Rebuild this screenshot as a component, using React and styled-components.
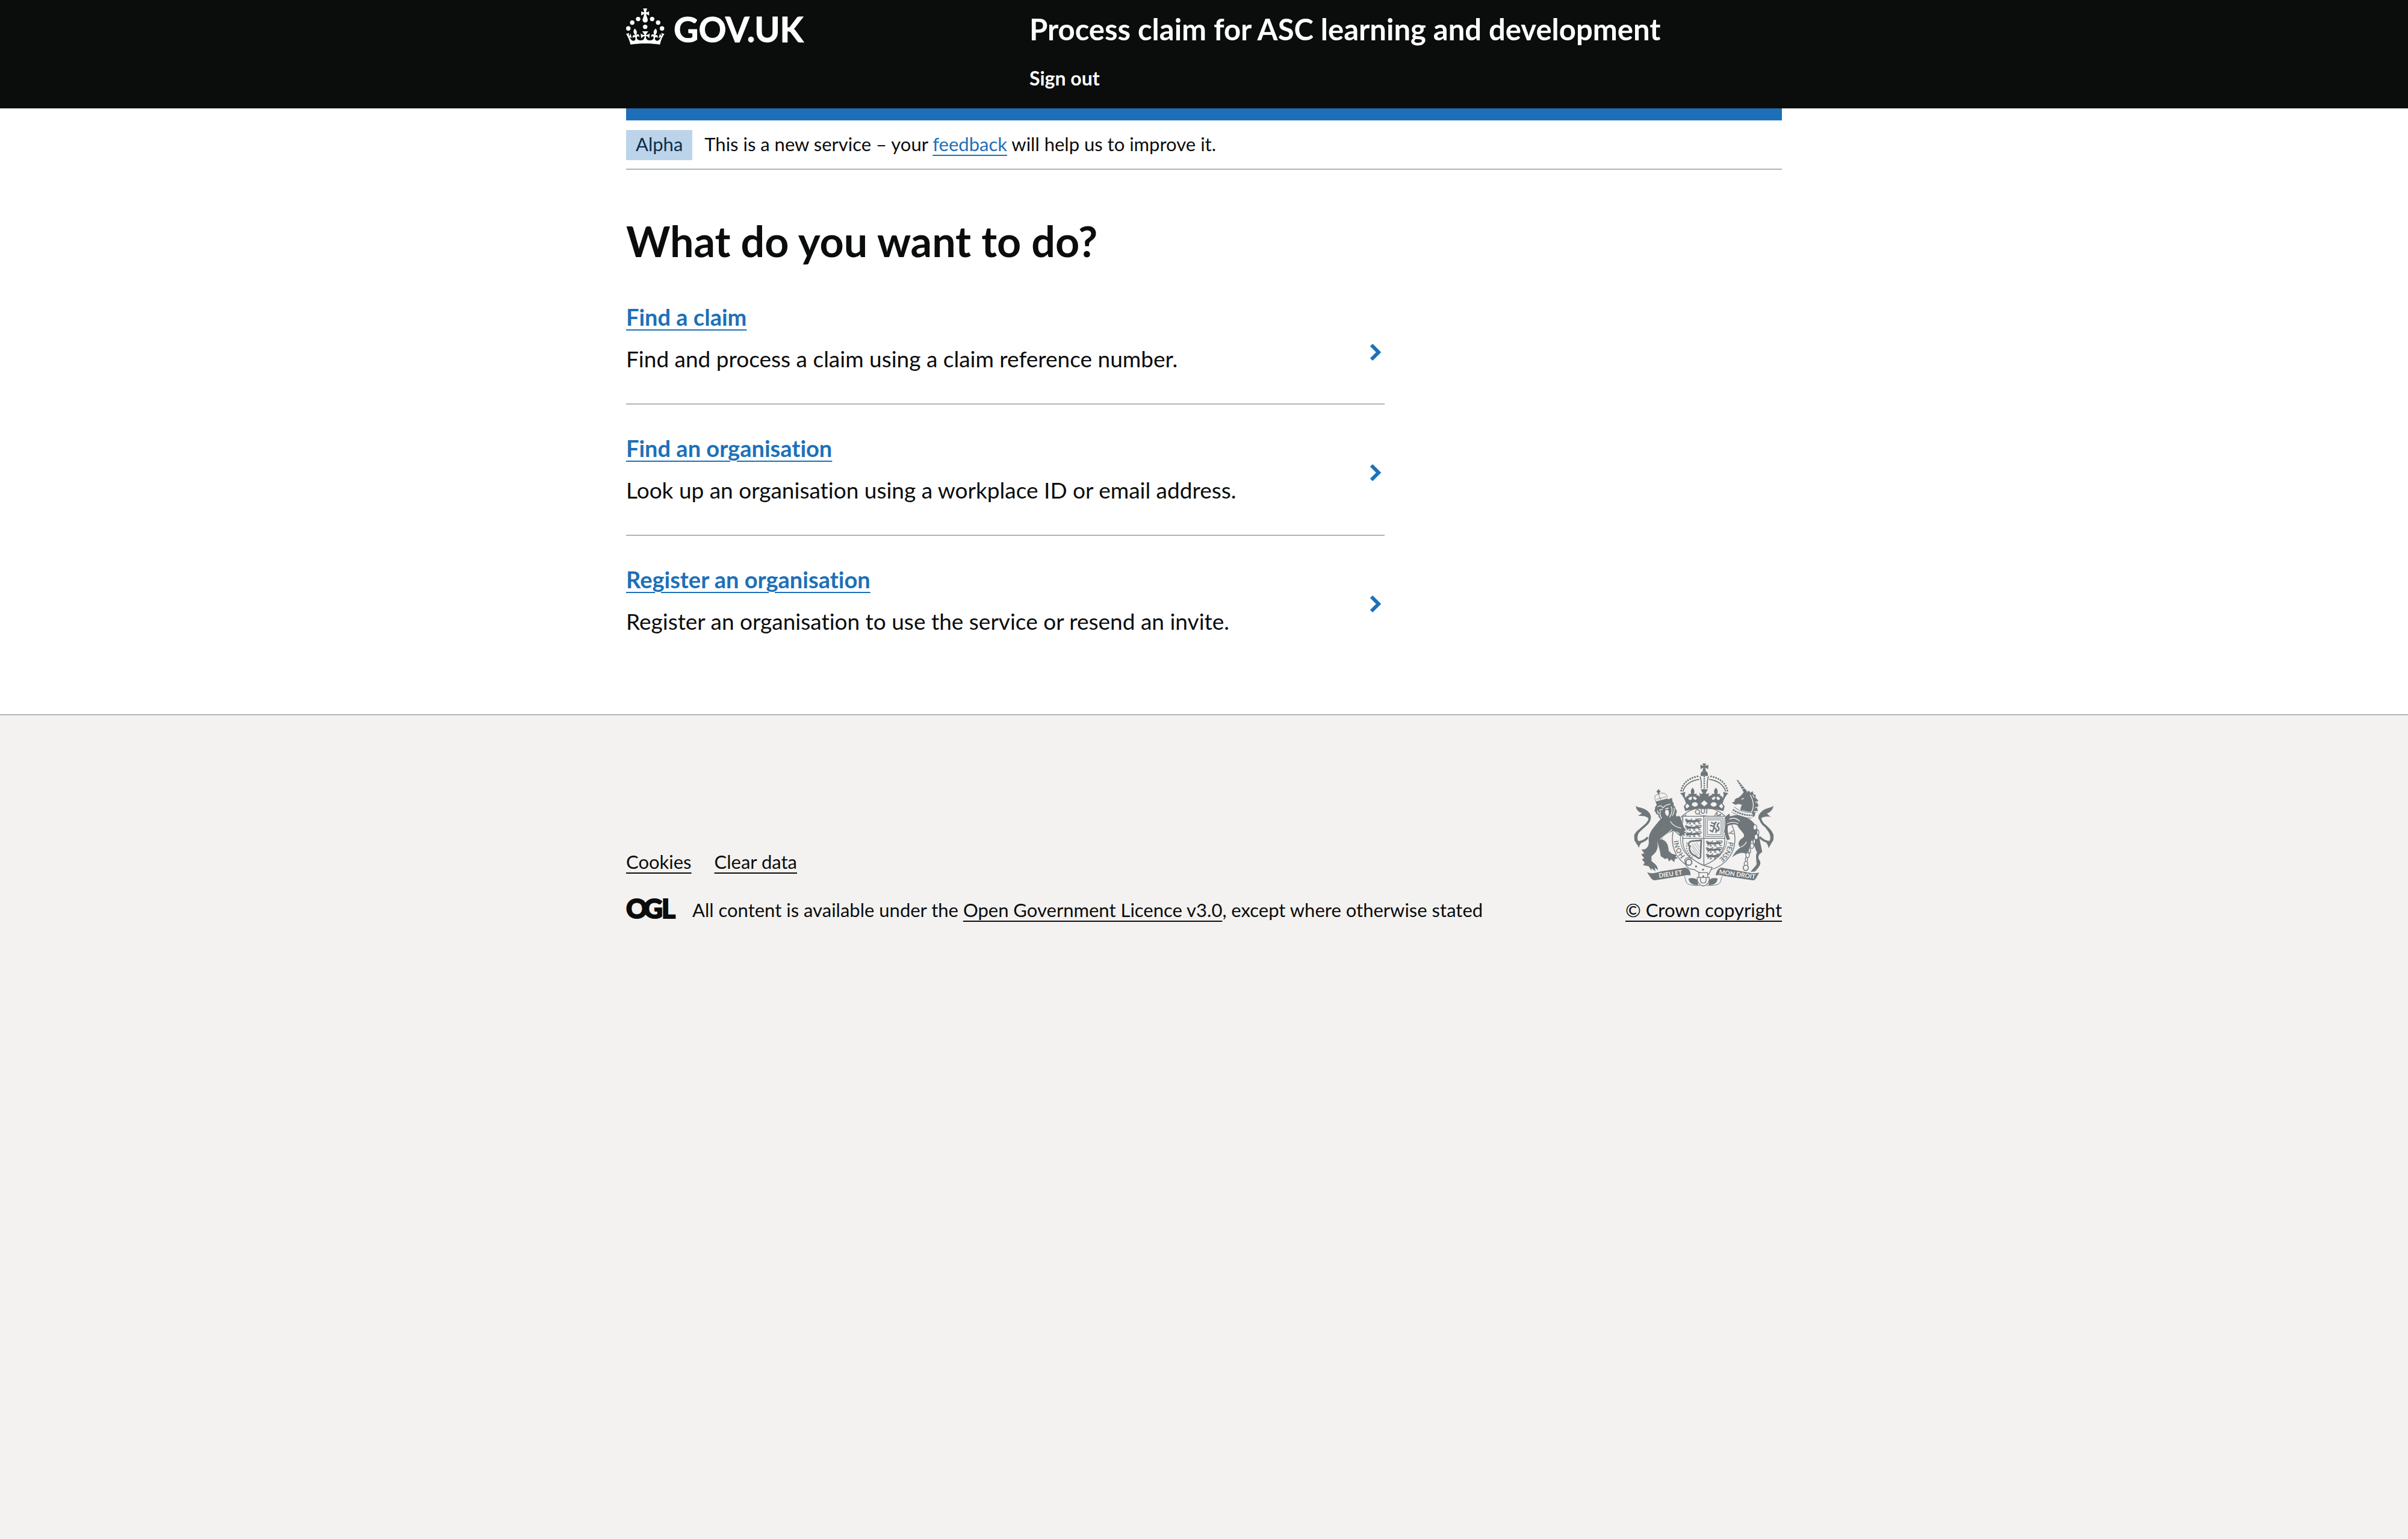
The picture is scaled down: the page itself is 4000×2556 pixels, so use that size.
import React from 'react';
import styled, { createGlobalStyle } from 'styled-components';

const color = {
  ink: '#0b0c0c',
  link: '#1d70b8',
  line: '#b1b4b6',
  canvas: '#f3f2f1',
  crest: '#6f777b',
};

const GlobalStyle = createGlobalStyle`
  *, *::before, *::after { box-sizing: border-box; }
  body {
    margin: 0;
    background: #fff;
    color: ${color.ink};
    font-family: Lato, "Liberation Sans", sans-serif;
    font-size: 37px;
    font-variant-ligatures: none;
    line-height: 50px;
  }
  h1, h2, p, ul { margin: 0; padding: 0; }
  ul { list-style: none; }
  svg { display: block; flex: none; overflow: visible; }
`;

const Page = styled.div`
  display: flex;
  flex-direction: column;
  min-height: 100vh;
`;

const Container = styled.div`
  width: 100%;
  max-width: 1920px;
  margin: 0 auto;
`;

const Link = styled.a`
  color: ${(p) => (p.$plain ? color.ink : color.link)};
  text-decoration: underline;
  text-decoration-thickness: 2px;
  text-underline-offset: 6px;
`;

const Header = styled.header`
  background: ${color.ink};
  color: #fff;
`;

const HeaderGrid = styled(Container)`
  display: grid;
  grid-template-columns: 1fr 2fr;
  column-gap: 45px;
  padding: 14px 0 30px;
`;

const LogoLink = styled.a`
  display: flex;
  align-items: flex-start;
  gap: 15px;
  justify-self: start;
  color: #fff;
  text-decoration: none;
`;

const Wordmark = styled.span`
  font-size: 57px;
  font-weight: 700;
  line-height: 68px;
  -webkit-text-stroke: 1px #fff;
`;

const ServiceNav = styled.div`
  display: flex;
  flex-direction: column;
  align-items: flex-start;
  gap: 28px;
`;

const ServiceName = styled.a`
  color: #fff;
  font-size: 49px;
  font-weight: 700;
  line-height: 68px;
  text-decoration: none;
`;

const NavLink = styled.a`
  color: #fff;
  font-size: 32px;
  font-weight: 700;
  line-height: 40px;
  text-decoration: none;
`;

const PhaseBanner = styled(Container)`
  display: flex;
  align-items: flex-start;
  gap: 20px;
  padding: 16px 0 14px;
  border-top: 20px solid ${color.link};
  border-bottom: 2px solid ${color.line};
  font-size: 31px;
  line-height: 46px;
`;

const Tag = styled.strong`
  padding: 0 16px 4px;
  background: #bbd4ea;
  color: #0c2d4a;
  font-weight: 400;
`;

const Main = styled.main`
  padding: 80px 0;
`;

const Title = styled.h1`
  margin-bottom: 52px;
  font-size: 70px;
  font-weight: 700;
  line-height: 76px;
`;

const Columns = styled.div`
  display: grid;
  grid-template-columns: repeat(3, 1fr);
  column-gap: 60px;
`;

const TaskList = styled.ul`
  grid-column: span 2;
`;

const Task = styled.li`
  display: flex;
  align-items: center;
  justify-content: space-between;
  padding-right: 6px;
  border-bottom: 2px solid ${color.line};
  &:last-child { border-bottom: 0; }
`;

const TaskText = styled.div`
  display: flex;
  flex-direction: column;
  gap: 20px;
  padding: 47px 0 49px;
  ${Task}:first-child & { padding-top: 11px; }
`;

const TaskHeading = styled.h2`
  font-size: 38px;
  font-weight: 700;
  line-height: 50px;
`;

const ChevronIcon = styled.svg`
  margin-top: 10px;
`;

const Footer = styled.footer`
  flex: 1;
  padding: 80px 0;
  border-top: 2px solid ${color.line};
  background: ${color.canvas};
  font-size: 31px;
  line-height: 40px;
`;

const FooterRow = styled(Container)`
  display: flex;
  align-items: flex-end;
  justify-content: space-between;
`;

const FooterMeta = styled.div`
  display: flex;
  flex-direction: column;
  gap: 40px;
`;

const FooterLinks = styled.ul`
  display: flex;
  gap: 38px;
`;

const Licence = styled.div`
  display: flex;
  align-items: flex-start;
  gap: 28px;
`;

const Copyright = styled.div`
  display: flex;
  flex-direction: column;
  align-items: center;
  gap: 19px;
`;

const OglText = styled.text`
  font: 900 44px Lato, "Liberation Sans", sans-serif;
  fill: ${color.ink};
  stroke: ${color.ink};
  stroke-width: 2px;
`;

const GarterText = styled.text`
  font: 400 33px Lato, "Liberation Sans", sans-serif;
  fill: ${color.crest};
  stroke: ${color.crest};
  stroke-width: 1px;
`;

const MottoText = styled.text`
  font: 700 31px Lato, "Liberation Sans", sans-serif;
  fill: ${color.canvas};
  text-anchor: middle;
`;

function Crown() {
  return (
    <svg width="64" height="60" viewBox="0 0 64 60" fill="currentColor" aria-hidden="true">
      <circle cx="20" cy="17.6" r="3.7" />
      <circle cx="10.2" cy="23.5" r="3.7" />
      <circle cx="3.7" cy="33.2" r="3.7" />
      <circle cx="31.7" cy="30.6" r="3.7" />
      <circle cx="43.3" cy="17.6" r="3.7" />
      <circle cx="53.2" cy="23.5" r="3.7" />
      <circle cx="59.7" cy="33.2" r="3.7" />
      <path d="M33.1,9.8c.2-.1.3-.3.5-.5l4.6,2.4v-6.8l-4.6,1.5c-.1-.2-.3-.3-.5-.5l1.9-5.9h-6.7l1.9,5.9c-.2.1-.3.3-.5.5l-4.6-1.5v6.8l4.6-2.4c.1.2.3.3.5.5l-2.6,8c-.9,2.8,1.2,5.7,4.1,5.7h0c3,0,5.1-2.9,4.1-5.7l-2.6-8ZM37,37.9s-3.4,3.8-4.1,6.1c2.2,0,4.2-.5,6.4-2.8l-.7,8.5c-2-2.8-4.4-4.1-5.7-3.8.1,3.1.5,6.7,5.8,7.2,3.7.3,6.7-1.5,7-3.8.4-2.6-2-4.3-3.7-1.6-1.4-4.5,2.4-6.1,4.9-3.2-1.9-4.5-1.8-7.7,2.4-10.9,3,4,2.6,7.3-1.2,11.1,2.4-1.3,6.2,0,4,4.6-1.2-2.8-3.7-2.2-4.2.2-.3,1.7.7,3.7,3,4.2,1.9.3,4.7-.9,7-5.9-1.3,0-2.4.7-3.9,1.7l2.4-8c.6,2.3,1.4,3.7,2.2,4.5.6-1.6.5-2.8,0-5.3l5,1.8c-2.6,3.6-5.2,8.7-7.3,17.5-7.4-1.1-15.7-1.7-24.5-1.7h0c-8.8,0-17.1.6-24.5,1.7-2.1-8.9-4.7-13.9-7.3-17.5l5-1.8c-.5,2.5-.6,3.7,0,5.3.8-.8,1.6-2.3,2.2-4.5l2.4,8c-1.5-1-2.6-1.7-3.9-1.7,2.3,5,5.2,6.2,7,5.9,2.3-.4,3.3-2.4,3-4.2-.5-2.4-3-3.1-4.2-.2-2.2-4.6,1.6-6,4-4.6-3.7-3.7-4.2-7.1-1.2-11.1,4.2,3.2,4.3,6.4,2.4,10.9,2.5-2.8,6.3-1.3,4.9,3.2-1.8-2.7-4.1-1-3.7,1.6.3,2.3,3.3,4.1,7,3.8,5.4-.5,5.7-4.2,5.8-7.2-1.3-.2-3.7,1-5.7,3.8l-.7-8.5c2.2,2.3,4.2,2.7,6.4,2.8-.7-2.3-4.1-6.1-4.1-6.1h10.6Z" />
    </svg>
  );
}

function Chevron() {
  return (
    <ChevronIcon width="18" height="28" viewBox="0 0 18 28" aria-hidden="true">
      <path d="M2 2 L14 14 L2 26" fill="none" stroke={color.link} strokeWidth="6" />
    </ChevronIcon>
  );
}

function OglLogo() {
  return (
    <svg width="82" height="40" viewBox="0 0 82 40" role="img" aria-label="OGL">
      <OglText x="0" y="34">O</OglText>
      <OglText x="29" y="34">G</OglText>
      <OglText x="59" y="34">L</OglText>
    </svg>
  );
}

function HeraldicLion() {
  return (
    <g fill="none" stroke={color.crest} strokeLinecap="round">
      <path strokeWidth="11" d="M14 14 C24 9 34 17 44 14 S60 10 68 13" />
      <circle cx="10" cy="12" r="7" fill={color.crest} strokeWidth="2" />
      <path strokeWidth="4" d="M17 18 L8 25 M22 18 L26 27 L19 27 M49 17 L42 26 L50 27 M64 15 L70 25 L77 24 M68 12 C80 14 84 2 76 2 C68 1 58 6 52 2 M34 2 L28 6 M6 2 L0 7" />
    </g>
  );
}

const lionRows = [0, 1, 2];

function ThreeLions({ x, y }) {
  return lionRows.map((i) => (
    <g key={i} transform={`translate(${x} ${y + i * 32})`}>
      <HeraldicLion />
    </g>
  ));
}

function CrownHalf() {
  return (
    <g>
      <path fill="none" stroke={color.crest} strokeWidth="9" strokeLinecap="round" strokeDasharray="0.1 12.6" d="M308 219 C315 184 344 156 393 148" />
      <path fill="none" stroke={color.crest} strokeWidth="5" d="M316 224 C326 192 352 170 398 163" />
      <path fill="none" stroke={color.crest} strokeWidth="5" d="M402 148 C408 164 409 184 408 208" />
      <path d="M423 246 L405 212 H424 V300 Z" />
      <path d="M303 232 L330 226 C324 238 326 247 331 256 C338 240 350 240 352 256 C345 252 341 257 347 264 C356 270 363 263 362 250 C350 252 343 244 344 235 C351 237 356 236 358 234 C353 222 358 212 365 205 C373 213 377 224 371 234 C376 237 381 236 385 233 C388 244 380 252 367 250 C368 262 375 268 383 264 C388 258 384 252 378 255 C380 241 393 238 399 250 C403 244 400 236 397 230 C408 238 414 236 424 228 V312 C388 308 355 314 328 321 L321 297 L332 284 C326 262 316 244 303 232 Z" />
    </g>
  );
}

function Garter() {
  return (
    <g>
      <circle cx="420" cy="460" r="156" fill={color.canvas} stroke={color.crest} strokeWidth="4" />
      <circle cx="420" cy="460" r="116" fill={color.canvas} stroke={color.crest} strokeWidth="3" />
      <GarterText><textPath href="#garter" startOffset="26">HONI</textPath></GarterText>
      <GarterText><textPath href="#garter" startOffset="168">SOIT</textPath></GarterText>
      <GarterText><textPath href="#garter" startOffset="276">QUI</textPath></GarterText>
      <GarterText><textPath href="#garter" startOffset="370">MAL</textPath></GarterText>
      <GarterText><textPath href="#garter" startOffset="478">Y</textPath></GarterText>
      <GarterText><textPath href="#garter" startOffset="530">PENSE</textPath></GarterText>
    </g>
  );
}

function Shield() {
  return (
    <g>
      <path d="M316 347 H525 V470 C525 530 480 568 421 592 C362 568 316 530 316 470 Z" fill={color.canvas} stroke={color.crest} strokeWidth="4" />
      <g clipPath="url(#shield)">
        <path fill="none" stroke={color.crest} strokeWidth="4" d="M421 347 V592 M316 457 H525" />
        <ThreeLions x={328} y={358} />
        <ThreeLions x={432} y={468} />
        <path fill="none" stroke={color.crest} strokeWidth="3" d="M429 356 H516 V448 H429 Z M438 365 H507 V439 H438 Z" />
        <path fill="none" stroke={color.crest} strokeWidth="7" d="M456 378 L472 384 L484 376 M478 380 L470 400 L484 414 M470 398 L452 392 M472 404 L464 424 L450 416 M484 412 L480 430 M486 420 C500 420 498 400 488 398 C486 388 494 382 498 378" />
        <path fill="none" stroke={color.crest} strokeWidth="8" d="M350 476 C366 464 382 474 408 466 L404 552 C396 562 388 552 380 546 C352 536 344 510 352 496 C340 492 344 482 350 476 Z" />
        <path fill="none" stroke={color.crest} strokeWidth="2" d="M360 496 L392 544 M362 484 L398 536 M372 480 L400 520 M384 478 L400 502 M358 512 L384 544" />
        <path fill="none" stroke={color.crest} strokeWidth="4" strokeDasharray="8 5" d="M338 478 C328 506 340 540 370 556" />
      </g>
    </g>
  );
}

function Lion() {
  return (
    <g>
      <path fill="none" stroke={color.crest} strokeWidth="11" d="M100 308 C150 322 166 350 138 384 C108 412 78 430 80 462 C82 486 122 476 142 452" />
      <path d="M82 294 C94 308 118 300 140 322 C152 334 156 352 150 364 C142 352 128 342 92 346 C104 338 110 334 112 330 C98 328 88 318 84 306 Z" />
      <path d="M74 440 C82 424 94 412 112 404 C92 430 88 448 92 466 C96 478 104 480 112 478 C104 484 100 492 98 504 C92 488 72 476 74 440 Z" />
      <path stroke={color.canvas} strokeWidth="5" paintOrder="stroke" d="M300 346 C318 380 316 398 326 408 L332 416 L322 422 L334 428 L322 434 L330 444 L312 440 L310 448 C296 446 288 430 270 420 C250 428 226 440 212 462 C236 470 244 490 246 520 L262 534 L288 540 L280 548 L292 556 L276 560 L274 576 L258 562 L248 572 L240 556 L228 560 L206 546 L202 520 C196 500 194 486 188 468 C196 504 188 524 160 546 L160 570 C176 584 192 592 192 616 L176 602 L180 622 L160 606 L160 618 L146 596 L118 590 L126 578 L112 562 L124 556 L108 536 L124 532 L110 512 C134 516 150 498 146 466 C144 430 170 404 196 372 C214 350 240 344 270 350 Z" />
      <path fill="none" stroke={color.canvas} strokeWidth="4" d="M204 462 C222 446 250 428 262 412 M254 372 C266 392 284 402 308 406 M284 424 L300 436" />
      <path d="M186 292 C172 304 182 310 174 320 C186 326 176 336 194 340 C192 352 204 356 210 372 C220 362 228 380 238 368 C250 372 262 356 264 350 C276 352 280 350 286 348 C276 338 288 332 286 318 C276 312 284 300 270 294 C276 282 262 276 264 268 L262 256 L244 262 L184 280 Z" />
      <path fill="none" stroke={color.canvas} strokeWidth="4" d="M190 300 L206 294 L218 304 L232 292 L254 286 M198 316 L216 312 M228 310 L246 306 M206 322 C196 332 204 346 210 358 M258 298 C266 316 262 334 250 352 M272 304 C276 320 270 334 264 344 M190 318 L194 336" />
      <path fill={color.canvas} d="M230 318 C236 310 246 316 246 326 C248 340 240 350 236 344 C230 336 224 330 230 318 Z" />
      <path d="M180 274 L240 258 L242 266 L184 284 Z M191 214 H199 V220 H204 V228 H199 V236 H191 V228 H186 V220 H191 Z" />
      <path fill="none" stroke={color.crest} strokeWidth="4" strokeDasharray="4 3" d="M182 272 C170 250 180 238 194 238 C214 224 240 234 238 256 M196 240 L206 264 M186 262 L232 250" />
    </g>
  );
}

const chainLinks = [[676, 402], [690, 428], [682, 450], [672, 472], [661, 494], [649, 518], [639, 541], [633, 564], [631, 585]];

function Unicorn() {
  return (
    <g>
      <path d="M584 166 L592 168 L638 224 L622 232 Z" />
      <path fill="none" stroke={color.canvas} strokeWidth="3" d="M588 182 L602 174 M594 192 L610 184 M601 202 L618 194 M608 213 L626 206" />
      <path d="M612 236 L626 220 L636 228 L646 218 L652 230 L664 222 L668 236 L680 242 L678 254 L692 268 L686 278 L694 294 L686 304 L690 320 L678 328 L674 346 L656 358 L662 324 C640 328 622 316 606 318 C600 306 608 300 610 290 C598 286 588 284 580 290 L560 280 L574 274 C572 264 580 258 590 256 C600 250 606 244 612 236 Z" />
      <path fill="none" stroke={color.canvas} strokeWidth="4" d="M652 240 C668 270 674 300 658 326 M664 240 L672 254 M686 272 L678 280 M688 300 L676 306 M686 322 L670 324 M608 262 L620 258" />
      <path stroke={color.canvas} strokeWidth="5" paintOrder="stroke" d="M526 350 L548 334 L552 348 C580 338 600 340 626 350 C660 362 686 392 694 430 C698 466 708 500 712 526 C692 536 686 554 702 572 C706 592 690 606 676 622 L654 624 C666 606 680 596 684 584 C682 560 678 540 686 528 C676 510 672 484 660 466 C648 496 652 514 632 534 C612 524 586 530 562 552 C578 520 592 510 606 502 C588 494 590 472 612 456 C640 440 600 420 588 392 C572 384 556 388 542 394 C536 410 542 440 552 462 L536 466 L522 424 L528 384 Z" />
      <path fill="none" stroke={color.canvas} strokeWidth="4" d="M592 384 C576 372 556 376 536 384 M606 500 C616 496 628 486 634 474 M548 362 C568 352 586 358 600 372" />
      <path fill="none" stroke={color.canvas} strokeWidth="20" d="M562 312 C590 332 630 346 664 344" />
      <path fill="none" stroke={color.crest} strokeWidth="8" strokeDasharray="9 3" d="M566 314 C590 332 630 344 662 342" />
      <path fill="none" stroke={color.crest} strokeWidth="3" d="M572 300 C596 322 634 330 664 328 M560 326 C588 344 624 356 656 356" />
      <path fill="none" stroke={color.crest} strokeWidth="11" d="M744 324 C704 330 690 356 716 386 C748 414 768 430 762 462 C758 486 722 474 698 450" />
      <path d="M768 294 C756 308 730 302 706 326 C692 340 690 352 696 366 C706 352 728 346 756 350 C744 342 738 338 736 332 C750 328 764 318 768 294 Z M768 440 C760 424 748 412 728 404 C750 430 756 448 750 466 C746 476 738 480 730 478 C738 484 742 494 744 508 C750 488 768 476 768 440 Z" />
      {chainLinks.map(([cx, cy], i) => (
        <ellipse key={cy} cx={cx} cy={cy} rx={i % 2 ? 5 : 9} ry="13" fill={color.canvas} stroke={color.crest} strokeWidth="4" />
      ))}
      <circle cx="630" cy="604" r="13" fill={color.canvas} stroke={color.crest} strokeWidth="5" />
    </g>
  );
}

function RoyalCrown() {
  return (
    <g>
      <path d="M414 84 H432 L427 97 L443 90 V112 L427 105 L432 120 H414 L419 105 L404 112 V90 L419 97 Z" />
      <path d="M405 146 C403 128 412 120 423 120 C434 120 443 128 441 146 Z" />
      <path fill="none" stroke={color.crest} strokeWidth="8" strokeLinecap="round" strokeDasharray="0.1 11" d="M423 150 V206" />
      <CrownHalf />
      <g transform="matrix(-1 0 0 1 846 0)">
        <CrownHalf />
      </g>
      <g fill={color.canvas}>
        <path d="M423 268 L440 283 L423 298 L406 283 Z M338 284 L350 296 L337 308 L328 298 Z M508 284 L496 296 L509 308 L518 298 Z" />
        <ellipse cx="376" cy="288" rx="15" ry="11" />
        <ellipse cx="470" cy="288" rx="15" ry="11" />
      </g>
    </g>
  );
}

function StrapAndRibbon() {
  return (
    <g>
      <g fill={color.canvas} stroke={color.crest} strokeWidth="4">
        <path d="M326 566 C328 552 350 550 364 560 C390 576 410 596 462 602 L446 636 C416 634 396 630 372 612 C346 612 328 598 326 566 Z" />
        <path d="M396 628 H440 V656 L418 694 L396 656 Z" />
        <path d="M388 652 H448 C450 676 436 692 418 694 C400 692 386 676 388 652 Z" />
        <path fill="none" d="M404 652 V668 C406 684 430 684 432 668 V652" />
        <circle cx="346" cy="576" r="15" strokeWidth="6" />
      </g>
      <circle cx="382" cy="597" r="5" />
      <circle cx="417" cy="613" r="5" />
      <circle cx="418" cy="646" r="5" />
      <path d="M138 625 C158 636 182 630 206 622 L326 603 C344 604 356 618 354 642 C346 640 338 640 326 642 L178 666 C166 668 158 660 138 625 Z" />
      <path d="M696 627 C676 634 654 630 636 626 L508 603 C496 604 482 618 480 642 C492 638 506 640 520 644 L664 666 C676 668 682 656 696 627 Z" />
      <path d="M344 658 C362 652 380 656 388 664 L392 690 C366 690 348 682 344 658 Z M490 658 C474 652 458 656 448 664 L444 690 C470 690 486 682 490 658 Z" />
      <path fill="none" stroke={color.crest} strokeWidth="3" d="M322 644 C332 652 326 680 346 686 C366 694 384 690 400 692 M514 646 C504 654 510 680 490 686 C470 694 452 690 436 692" />
      <MottoText transform="translate(256 645) rotate(-8)">DIEU ET</MottoText>
      <MottoText transform="translate(586 647) rotate(8)">MON DROIT</MottoText>
    </g>
  );
}

function RoyalArms() {
  return (
    <svg width="232" height="204" viewBox="72 84 696 612" fill={color.crest} aria-hidden="true">
      <defs>
        <path id="garter" d="M347 562 A126 126 0 1 1 493 562 A126 126 0 0 1 347 562" />
        <clipPath id="shield">
          <path d="M316 347 H525 V470 C525 530 480 568 421 592 C362 568 316 530 316 470 Z" />
        </clipPath>
      </defs>
      <Garter />
      <Shield />
      <Lion />
      <Unicorn />
      <RoyalCrown />
      <StrapAndRibbon />
    </svg>
  );
}

const tasks = [
  { title: 'Find a claim', text: 'Find and process a claim using a claim reference number.' },
  { title: 'Find an organisation', text: 'Look up an organisation using a workplace ID or email address.' },
  { title: 'Register an organisation', text: 'Register an organisation to use the service or resend an invite.' },
];

export default function App() {
  return (
    <Page>
      <GlobalStyle />
      <Header>
        <HeaderGrid>
          <LogoLink href="#">
            <Crown />
            <Wordmark>GOV.UK</Wordmark>
          </LogoLink>
          <ServiceNav>
            <ServiceName href="#">Process claim for ASC learning and development</ServiceName>
            <NavLink href="#">Sign out</NavLink>
          </ServiceNav>
        </HeaderGrid>
      </Header>
      <PhaseBanner>
        <Tag>Alpha</Tag>
        <p>
          This is a new service – your <Link href="#">feedback</Link> will help us to improve it.
        </p>
      </PhaseBanner>
      <Container>
        <Main>
          <Title>What do you want to do?</Title>
          <Columns>
            <TaskList>
              {tasks.map((task) => (
                <Task key={task.title}>
                  <TaskText>
                    <TaskHeading>
                      <Link href="#">{task.title}</Link>
                    </TaskHeading>
                    <p>{task.text}</p>
                  </TaskText>
                  <Chevron />
                </Task>
              ))}
            </TaskList>
          </Columns>
        </Main>
      </Container>
      <Footer>
        <FooterRow>
          <FooterMeta>
            <FooterLinks>
              <li><Link $plain href="#">Cookies</Link></li>
              <li><Link $plain href="#">Clear data</Link></li>
            </FooterLinks>
            <Licence>
              <OglLogo />
              <p>
                All content is available under the <Link $plain href="#">Open Government Licence v3.0</Link>, except where otherwise stated
              </p>
            </Licence>
          </FooterMeta>
          <Copyright>
            <RoyalArms />
            <Link $plain href="#">© Crown copyright</Link>
          </Copyright>
        </FooterRow>
      </Footer>
    </Page>
  );
}
